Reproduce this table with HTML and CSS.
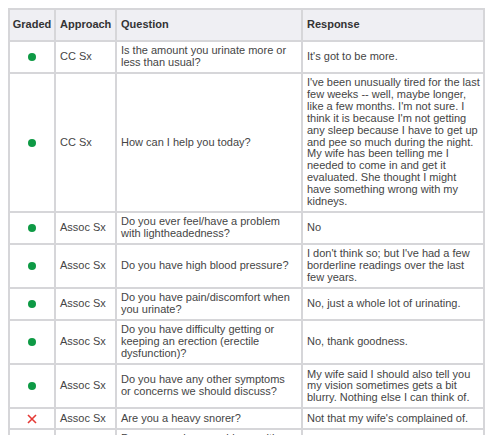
FILE: index.html
```html
<!DOCTYPE html>
<html>
<head>
<meta charset="utf-8">
<link rel="stylesheet" href="styles.css">
</head>
<body>
<div class="wrap">
<table class="grid">
  <colgroup>
    <col class="c-graded"><col class="c-approach"><col class="c-question"><col class="c-response">
  </colgroup>
  <thead>
    <tr><th class="center">Graded</th><th>Approach</th><th>Question</th><th>Response</th></tr>
  </thead>
  <tbody>
    <tr><td class="center"><span class="dot"></span></td><td>CC Sx</td><td>Is the amount you urinate more or less than usual?</td><td class="resp">It's got to be more.</td></tr>
    <tr><td class="center"><span class="dot"></span></td><td>CC Sx</td><td>How can I help you today?</td><td class="resp">I've been unusually tired for the last few weeks -- well, maybe longer, like a few months. I'm not sure. I think it is because I'm not getting any sleep because I have to get up and pee so much during the night. My wife has been telling me I needed to come in and get it evaluated. She thought I might have something wrong with my kidneys.</td></tr>
    <tr><td class="center"><span class="dot"></span></td><td>Assoc Sx</td><td>Do you ever feel/have a problem with lightheadedness?</td><td class="resp">No</td></tr>
    <tr><td class="center"><span class="dot"></span></td><td>Assoc Sx</td><td>Do you have high blood pressure?</td><td class="resp">I don't think so; but I've had a few borderline readings over the last few years.</td></tr>
    <tr><td class="center"><span class="dot"></span></td><td>Assoc Sx</td><td>Do you have pain/discomfort when you urinate?</td><td class="resp">No, just a whole lot of urinating.</td></tr>
    <tr><td class="center"><span class="dot"></span></td><td>Assoc Sx</td><td>Do you have difficulty getting or keeping an erection (erectile dysfunction)?</td><td class="resp">No, thank goodness.</td></tr>
    <tr><td class="center"><span class="dot"></span></td><td>Assoc Sx</td><td>Do you have any other symptoms or concerns we should discuss?</td><td class="resp">My wife said I should also tell you my vision sometimes gets a bit blurry. Nothing else I can think of.</td></tr>
    <tr><td class="center"><svg class="cross" width="10" height="10" viewBox="0 0 10 10"><path d="M1 1L9 9M9 1L1 9" stroke="#e53935" stroke-width="1.6" fill="none"/></svg></td><td>Assoc Sx</td><td>Are you a heavy snorer?</td><td class="resp">Not that my wife's complained of.</td></tr>
    <tr><td class="center"><span class="dot"></span></td><td>Assoc Sx</td><td>Do you ever have problems with your sleep at night?</td><td class="resp">Only that I have to get up to pee.</td></tr>
  </tbody>
</table>
</div>
</body>
</html>
```
FILE: styles.css
```css
html { overflow: hidden; }
body {
  margin: 8px 0 8px 8px;
  background: #fff;
  font-family: "Liberation Sans", Arial, sans-serif;
  font-size: 11px;
  color: #454545;
}
.wrap { width: 477px; }
.grid {
  border-collapse: collapse;
  table-layout: fixed;
  width: 100%;
}
.c-graded { width: 46px; }
.c-approach { width: 61px; }
.c-question { width: 186px; }
.c-response { width: auto; }
.grid th, .grid td {
  border: 2px solid #d6d6d9;
  vertical-align: middle;
  text-align: left;
  line-height: 11.85px;
}
.grid th {
  background: #efeff3;
  color: #333;
  font-weight: bold;
  padding: 9px 4px;
}
.grid td {
  padding: 3.25px 5px 3.25px 4px;
}
.grid td.resp { padding-right: 0; }
.grid .center { text-align: center; padding-left: 2px; padding-right: 2px; }
.dot {
  display: inline-block;
  width: 8px;
  height: 8px;
  border-radius: 50%;
  background: #0e9a45;
  vertical-align: middle;
}
.cross { display: inline-block; vertical-align: middle; }
```
